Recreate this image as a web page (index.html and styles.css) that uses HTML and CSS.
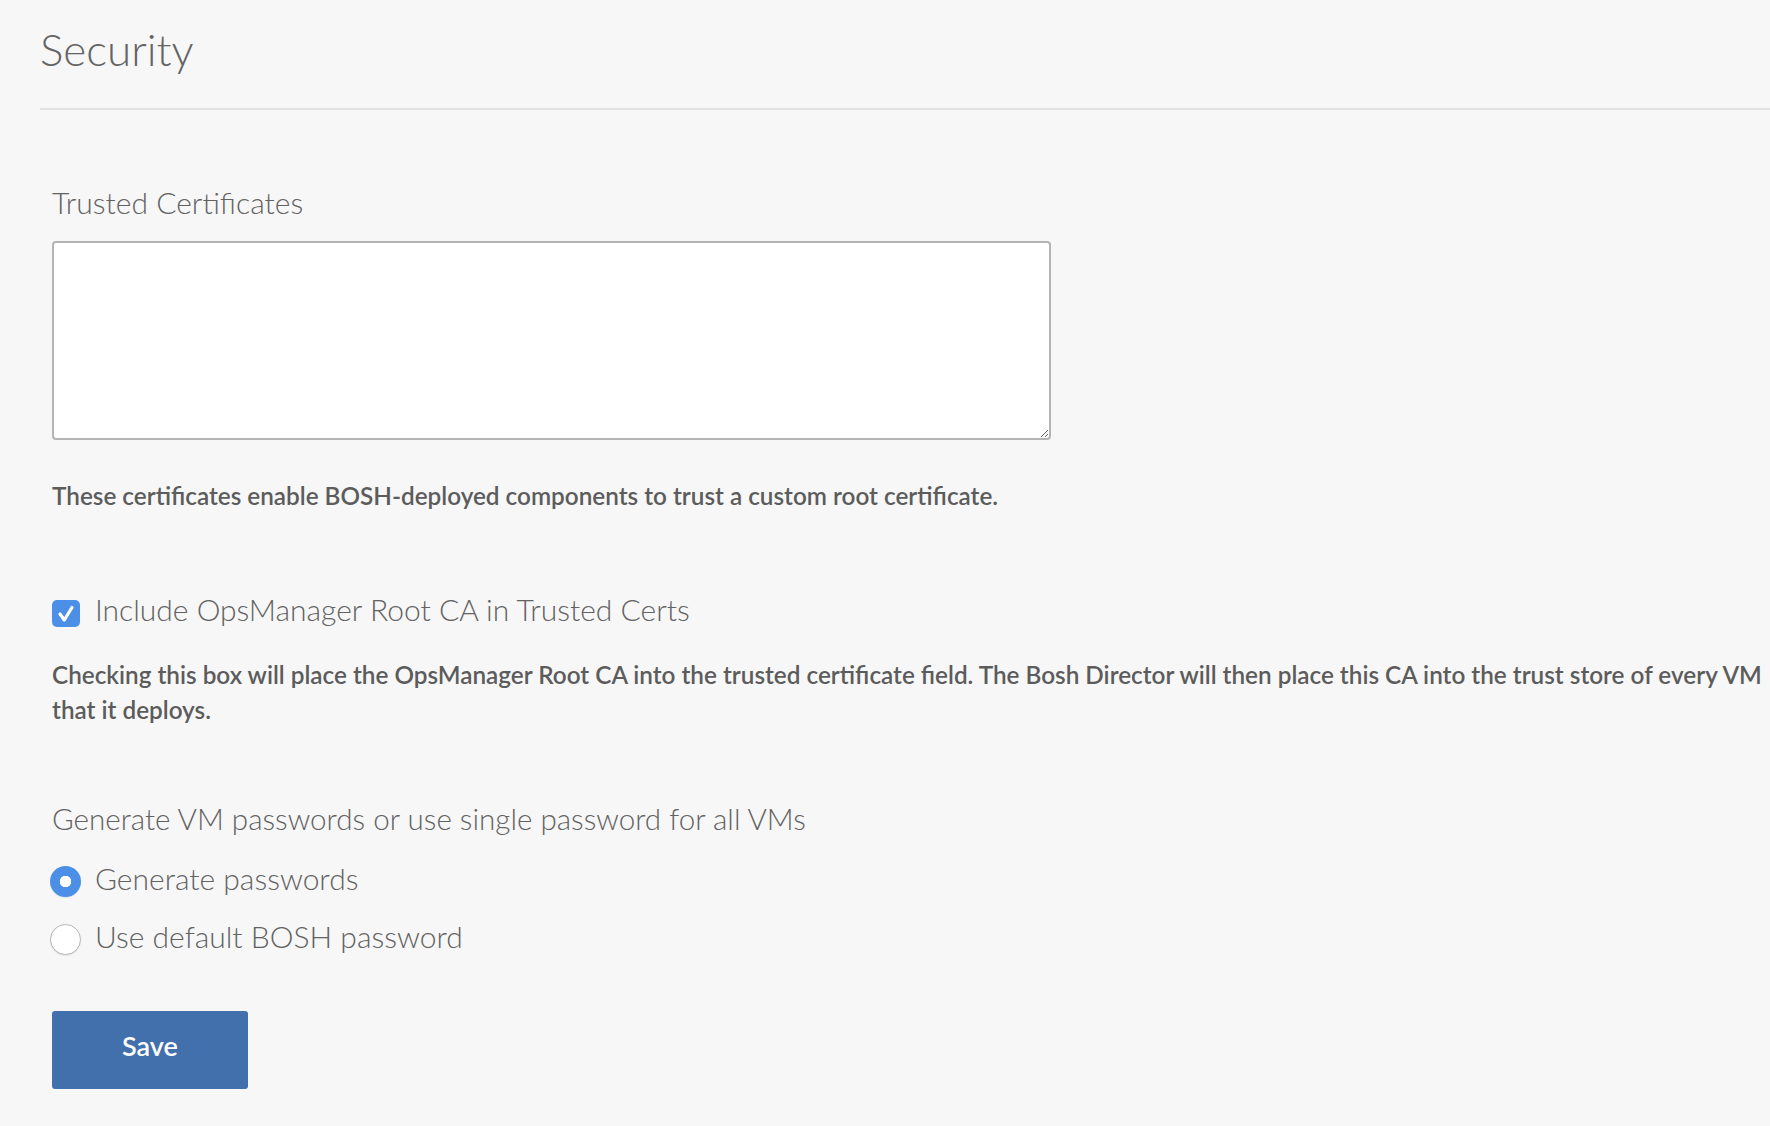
FILE: index.html
```html
<!DOCTYPE html>
<html lang="en">
<head>
<meta charset="utf-8">
<title>Security</title>
<link rel="stylesheet" href="styles.css">
</head>
<body>
<div class="page">
  <h1 class="title">Security</h1>
  <div class="divider"></div>
  <form class="form">
    <div class="field">
      <label class="field-label" for="certs">Trusted Certificates</label>
      <textarea id="certs" class="cert-input"></textarea>
      <p class="help help-first">These certificates enable BOSH-deployed components to trust a custom root certificate.</p>
    </div>
    <div class="field field-check">
      <label class="check-row">
        <span class="checkbox">
          <svg viewBox="0 0 28 27" width="28" height="27"><path d="M8 14 L12.3 20 L20 7.5" fill="none" stroke="#fff" stroke-width="3.2" stroke-linecap="round" stroke-linejoin="round"/></svg>
        </span>
        <span class="option-text">Include OpsManager Root CA in Trusted Certs</span>
      </label>
      <p class="help help-check">Checking this box will place the OpsManager Root CA into the trusted certificate field. The Bosh Director will then place this CA into the trust store of every VM that it deploys.</p>
    </div>
    <div class="field field-radio">
      <div class="field-label">Generate VM passwords or use single password for all VMs</div>
      <label class="radio-row"><span class="radio radio-on"></span><span class="option-text">Generate passwords</span></label>
      <label class="radio-row radio-row-second"><span class="radio"></span><span class="option-text">Use default BOSH password</span></label>
    </div>
    <button type="button" class="save">Save</button>
  </form>
</div>
</body>
</html>
```

FILE: styles.css
```css
html, body {
  margin: 0;
  padding: 0;
  background: #f7f7f7;
}
body {
  font-family: Lato, "Source Sans Pro", "Liberation Sans", sans-serif;
  color: #5f5f5f;
}
.page {
  padding: 21px 0 0 40px;
}
.title {
  margin: 0;
  font-size: 44px;
  line-height: 56px;
  font-weight: 300;
  color: #646464;
}
.divider {
  margin-top: 31px;
  height: 2px;
  background: #e2e2e2;
}
.form {
  padding-left: 12px;
  display: flex;
  flex-direction: column;
  align-items: flex-start;
}
.field {
  display: flex;
  flex-direction: column;
  align-items: flex-start;
}
.field-label {
  display: block;
  margin-top: 74px;
  font-size: 30px;
  line-height: 36px;
  font-weight: 300;
  color: #626262;
}
.cert-input {
  margin-top: 21px;
  width: 999px;
  height: 199px;
  box-sizing: border-box;
  border: 2px solid #b4b4b4;
  border-radius: 4px;
  background: #fff;
  font: inherit;
  padding: 8px;
  resize: both;
}
.help {
  margin: 0;
  font-size: 24.3px;
  line-height: 35px;
  font-weight: 600;
  color: #5c5c5c;
}
.help-first {
  margin-top: 38px;
}
.check-row {
  margin-top: 78px;
  display: flex;
  align-items: flex-start;
}
.checkbox {
  width: 28px;
  height: 27px;
  margin-top: 9px;
  margin-right: 15px;
  border-radius: 5px;
  background: #4b8fe7;
  display: flex;
  align-items: center;
  justify-content: center;
}
.option-text {
  font-size: 30px;
  line-height: 36px;
  font-weight: 300;
  color: #626262;
}
.help-check {
  margin-top: 30px;
}
.field-radio .field-label {
  margin-top: 74px;
  font-size: 29.6px;
}
.radio-row {
  margin-top: 23px;
  display: flex;
  align-items: flex-start;
}
.radio-row-second {
  margin-top: 21px;
}
.radio {
  box-sizing: border-box;
  width: 31px;
  height: 31px;
  margin: 6px 14px 0 -2px;
  border-radius: 50%;
  border: 1px solid #b8b8b8;
  background: #fff;
  box-shadow: 0 1px 1px rgba(0,0,0,0.08);
}
.radio-on {
  border: none;
  background: radial-gradient(circle, #fff 0 5.5px, #4b8fe7 6px);
}
.save {
  margin-top: 56px;
  width: 196px;
  height: 78px;
  padding: 0 0 9px;
  border: none;
  border-radius: 3px;
  background: #4270ad;
  color: #fff;
  font-family: inherit;
  font-size: 27px;
  font-weight: 600;
  cursor: pointer;
}
```
